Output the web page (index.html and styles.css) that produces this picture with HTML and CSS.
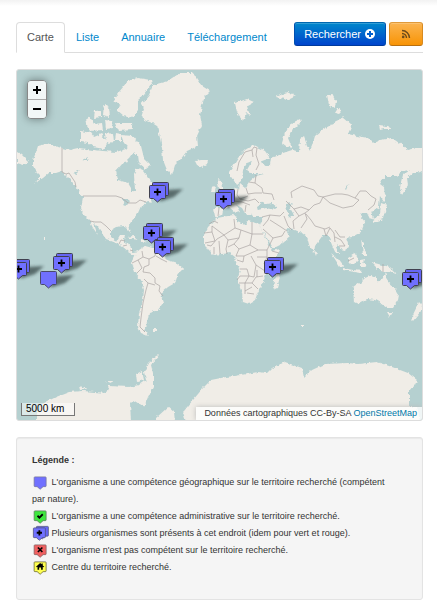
FILE: index.html
```html
<!DOCTYPE html>
<html lang="fr">
<head>
  <meta charset="UTF-8">
  <meta name="viewport" content="width=device-width, initial-scale=1.0">
  <title>Carte des organismes</title>
  <link rel="stylesheet" href="styles.css">
</head>
<body>

  <!-- shared marker shapes -->
  <svg class="sprites" aria-hidden="true">
    <defs>
      <filter id="soft" x="-20%" y="-50%" width="140%" height="200%"><feGaussianBlur stdDeviation="1.5"/></filter>
      <filter id="coast" filterUnits="userSpaceOnUse" x="0" y="60" width="440" height="370">
        <feTurbulence type="fractalNoise" baseFrequency="0.25" numOctaves="2" seed="4"/>
        <feDisplacementMap in="SourceGraphic" scale="4" xChannelSelector="R" yChannelSelector="G"/>
      </filter>
      <path id="bubble" d="M-7.5-6.5h14q1 0 1 1v11q0 1-1 1h-3l-4 3.500-4-3.500h-3q-1 0-1-1v-11q0-1 1-1z"/>
      <g id="plus"><path d="M-4 0h7M-.5-3.5v7" stroke="#000" stroke-width="1.8" fill="none"/></g>
      <g id="shadow"><path d="M0 9L8-2 25-3 16 5 4 9z" fill="#1c2b2b" opacity=".6" filter="url(#soft)"/></g>
      <g id="single"><use href="#shadow"/><use href="#bubble" fill="#7070ff" stroke="#4a4a6a"/></g>
      <g id="multi">
        <use href="#shadow"/>
        <use href="#bubble" x="3" y="-3" fill="#6666f4" stroke="#40404f"/>
        <use href="#bubble" fill="#7070ff" stroke="#40404f"/>
        <use href="#plus"/>
      </g>
    </defs>
  </svg>

  <div class="container">
    <div class="toolbar">
      <nav class="tabs">
        <a class="tab active" href="#carte">Carte</a>
        <a class="tab" href="#liste">Liste</a>
        <a class="tab" href="#annuaire">Annuaire</a>
        <a class="tab" href="#telechargement">Téléchargement</a>
      </nav>
      <div class="actions">
        <button class="btn btn-primary" type="button">Rechercher
          <svg class="btn-icon" viewBox="0 0 10 10" aria-hidden="true"><circle cx="5" cy="5" r="5" fill="#fff"/><path d="M2 5h6M5 2v6" stroke="#0260cc" stroke-width="2"/></svg>
        </button>
        <button class="btn btn-warning" type="button" aria-label="Flux RSS">
          <svg class="btn-icon" viewBox="0 0 10 10" aria-hidden="true"><g fill="none" stroke="#6b4a1b" stroke-width="1.4"><path d="M1 1.5a7.5 7.5 0 0 1 7.5 7.5M1 4.5a4.5 4.5 0 0 1 4.5 4.5"/></g><circle cx="2.2" cy="7.9" r="1.3" fill="#6b4a1b"/></svg>
        </button>
      </div>
    </div>

    <div class="map">
      <svg class="world" viewBox="17 70 405 350" role="img" aria-label="Carte du monde">
        <g class="land" filter="url(#coast)">
          <!-- North America -->
          <path d="M33 160L36 152 38 146 46 144 62 148 70 150 79 148 93 150 103 151 116 152 126 149 131 143 134 151 129 158 123 163 116 171 118 180 128 183 131 188 131 193 135 190 134 175 136 168 143 171 148 178 153 183 160 187 158 194 150 197 152 203 148 202 141 206 138 213 131 222 129 225 131 233 127 229 124 226 116 227 111 230 111 238 116 242 120 235 125 235 123 242 128 243 131 248 133 252 139 251 140 254 134 255 129 252 123 247 116 243 106 239 103 235 98 227 93 222 96 230 98 235 93 228 89 220 84 215 81 208 83 197 78 190 73 183 69 178 66 175 62 171 56 173 49 173 43 178 35 183 41 176 36 171 33 166z"/>
          <path d="M17 152L22 155 29 162 24 165 17 163z"/>
          <!-- Arctic islands -->
          <path d="M128 81L138 78 151 80 152 84 144 95 138 100 138 111 133 118 123 116 116 110 121 105 113 101 119 92z"/>
          <path d="M81 131L91 133 94 137 101 134 108 142 104 149 93 147 88 143 81 142zM121 135L133 136 141 146 144 158 151 165 146 169 139 163 138 155 131 150 124 143zM115 123L132 123 133 130 118 131zM84 121L90 117 94 124 102 123 103 130 90 131zM104 105L109 108 110 117 103 115zM95 111L101 110 101 117 94 118zM105 134L113 133 114 142 107 143zM116 133L121 134 121 142 115 140zM105 120L112 121 113 128 106 129zM117 158L126 156 128 162 121 164z"/>
          <!-- Greenland and Iceland -->
          <path d="M153 85L168 81 180 73 193 73 198 81 202 86 210 91 205 96 202 105 200 115 202 125 197 136 198 146 187 151 180 160 175 165 172 175 167 170 163 160 162 148 160 138 157 126 152 123 141 118 144 108 141 105 149 95z"/>
          <path d="M195 161L201 160 208 160 207 164 202 167 197 165z"/>
          <!-- South America -->
          <path d="M139 250L145 246 157 249 162 255 167 260 177 263 183 268 177 276 175 283 168 287 160 294 163 303 158 310 149 313 147 323 144 330 148 336 141 333 138 327 139 313 143 300 144 290 141 280 134 272 131 263 134 257z"/>
          <!-- Europe and Asia -->
          <path d="M230 171L238 158 245 150 253 145 265 151 270 158 262 161 264 166 270 165 271 158 277 156 283 153 292 150 299 152 300 140 304 137 307 145 310 151 307 158 312 146 315 136 322 130 338 121 342 116 352 125 348 134 357 136 368 138 373 143 380 140 392 138 402 145 408 150 417 148 424 148 424 170 418 173 413 173 407 178 408 185 402 195 400 187 403 175 410 170 402 171 397 176 385 176 380 184 384 187 386 200 384 202 380 196 379 207 371 212 373 218 370 219 367 213 362 213 361 217 365 222 361 232 352 237 346 238 349 247 343 251 338 245 336 247 339 254 336 254 332 245 328 235 323 235 315 246 314 253 310 248 307 237 302 233 295 230 286 229 290 237 283 243 273 248 268 240 262 230 260 225 263 217 253 217 251 212 252 210 250 215 246 215 242 208 235 204 240 212 236 213 229 207 223 210 222 215 215 217 213 208 222 208 221 202 228 198 233 193 235 188 239 189 240 184 245 188 249 182 256 176 264 174 253 174 247 170 252 161 247 163 243 170 242 181 237 185 233 178 230 177z"/>
          <path d="M217 179L221 180 222 188 225 191 217 194 219 188zM212 187L216 186 215 192 211 192zM235 103L247 99 254 102 247 106 250 116 246 113 243 121 237 112zM282 143L285 133 292 123 300 119 301 122 293 130 288 138 292 148 286 146zM327 95L332 94 336 102 334 108 329 105zM338 108L342 111 339 114 335 113zM379 125L387 126 392 129 384 129 380 130zM276 97L283 94 288 92 296 96 288 100z"/>
          <!-- Africa -->
          <path d="M212 223L217 218 233 215 237 217 237 222 245 225 247 221 260 224 262 230 268 243 272 251 280 249 278 255 267 266 266 274 263 283 258 292 255 300 249 304 243 302 242 293 237 280 240 270 236 262 235 257 230 253 222 254 213 255 208 250 204 243 204 235 208 227zM278 272L280 277 277 288 273 290 274 280z"/>
          <!-- Asian islands -->
          <path d="M381 203L387 205 384 214 383 219 375 222 372 224 372 220 380 215zM331 253L338 259 344 267 340 267zM343 268L353 270 362 271 361 273 343 270zM348 258L356 253 358 260 353 265 348 262zM360 260L366 259 363 262 366 267 360 267zM361 240L364 243 364 249 368 255 363 255zM371 262L382 265 390 267 397 274 390 272 383 272 378 269zM314 251L317 252 316 256zM126 237L133 236 139 240 132 239zM141 239L147 241 141 242z"/>
          <!-- Oceania -->
          <path d="M353 288L360 283 365 278 372 275 377 277 377 281 381 282 385 273 388 282 395 288 399 295 398 300 393 308 387 308 380 303 375 300 367 299 358 304 354 302zM387 312L393 312 390 317zM419 302L422 305 421 311 413 321 411 319z"/>
          <!-- Antarctica -->
          <path d="M36 422L36 415 44 403 56 397 69 392 83 391 106 393 109 386 129 387 139 385 146 380 144 372 148 363 156 356 159 355 151 365 153 373 153 387 148 397 144 407 133 400 130 403 131 422zM156 422L156 418 168 407 174 412 175 422zM186 422L183 412 193 400 203 388 211 380 226 377 235 376 258 372 267 373 272 368 285 362 302 368 304 378 312 370 325 364 348 363 358 364 377 362 392 367 408 373 417 380 415 385 409 392 409 407 417 407 420 422zM79 386L87 389 80 390zM105 381L114 381 110 383z"/>
          <path d="M153 329h4v2h-4zM136 374L142 371 144 380 137 382zM270 276h1v1zM44 237h1v2h-1zM301 325h3v1h-3z"/>
        </g>
        <!-- inland seas -->
        <g class="water" filter="url(#coast)">
          <path d="M257 206L263 202 266 204 272 203 278 208 275 210 266 208 258 210zM286 204L292 203 290 208 294 215 290 218 287 211zM122 199L129 199 130 203 125 206zM82 160L88 157 87 161zM73 173L80 170 76 174zM345 189L349 183 346 190z"/>
        </g>
        <g class="borders">
          <path d="M62 148V172L66 174 69 173 75 182 76 187M83 196H116L122 198 128 203 136 203 140 200 146 202M90 221L95 222 101 222 106 226 111 231M119 244L121 240 125 241M123 246L127 245M130 250L133 251"/>
          <path d="M142 251L143 257 149 259 149 265 144 267 143 272M149 259L155 256 156 250M156 256L161 259 167 262M143 257L138 260 132 263M138 260L142 268 137 273M143 272L150 273 155 278 155 283 160 286 159 291 163 296M144 279L148 283 146 290 143 303 141 318 140 327 145 332M148 283L155 285"/>
          <path d="M237 171L239 162 245 152 252 150 254 147 257 148M252 150L253 157M257 148L256 155 259 164 256 170M256 175L255 183 262 188 263 193 272 194 274 200M249 182L255 183M246 188L248 194 255 193 262 193M238 189L237 195 240 199 248 196M222 205L229 207M233 194L229 199 232 205M240 199L248 201 255 199 259 203M233 201L242 202 250 205M246 205L245 212M219 208L218 216"/>
          <path d="M262 217L270 215 280 216 284 212M270 215L268 220 263 226M270 220L281 227 287 231M263 229L273 238 270 244M273 238L282 236 285 231M284 216L288 226 292 230M292 198L291 192 302 186 314 190 318 196 323 197 320 203 314 205 309 210 301 207 294 209 286 201M294 209L299 216 305 213 309 210M299 216L293 221 294 229M305 213L307 219 301 228M306 214L311 220 315 226 325 229 330 227M323 197L330 203 343 208 353 206 359 200 355 198 348 195 342 194 335 194 323 197M355 198L360 191 366 191 371 196 376 199 374 205 368 210M324 229L326 236 330 228 334 233 335 242M335 230L340 237 345 237M335 237L341 240 345 246 339 246M348 261L354 258M383 264V272"/>
          <path d="M209 224L214 221 218 223M204 233L212 232 212 226 224 235 235 228 234 219M212 232L215 241 205 243M224 235L217 239 211 246 207 245M235 228L241 230 239 238 228 240 224 235M241 230L252 234 252 222M252 234H263M252 234L250 245 258 250 267 250 270 244M239 238L234 244 239 249 250 245M228 240L226 249 227 254M219 241L220 254M214 247L214 254M234 244L228 247M239 249L236 256 244 256 251 253 258 250M237 260L243 262 244 256M240 269L247 269 249 276 254 277 256 265 251 256M249 276H240L237 280M256 265L265 271M257 257L267 257V250M267 257L264 264M249 276L245 283V294M239 283L252 283 256 277 263 276M252 283L258 289M245 291L252 287M257 270L257 277M272 251L279 253M247 293L254 294"/>
        </g>
        <g class="markers">
          <use href="#multi" x="158" y="192"/>
          <use href="#multi" x="224" y="199"/>
          <use href="#multi" x="152" y="233"/>
          <use href="#multi" x="163" y="247"/>
          <use href="#multi" x="62" y="263"/>
          <use href="#multi" x="273" y="267"/>
          <use href="#multi" x="19" y="269"/>
          <use href="#multi" x="411" y="279"/>
          <use href="#single" x="49" y="278"/>
        </g>
      </svg>
      <div class="zoom">
        <button type="button" aria-label="Zoom avant">
          <svg viewBox="0 0 8 8" aria-hidden="true"><path d="M0 4h8M4 0v8" stroke="#000" stroke-width="2"/></svg>
        </button>
        <button type="button" aria-label="Zoom arrière">
          <svg viewBox="0 0 8 8" aria-hidden="true"><path d="M0 4h8" stroke="#000" stroke-width="2"/></svg>
        </button>
      </div>
      <div class="scale">5000 km</div>
      <div class="attribution">Données cartographiques CC-By-SA <a href="#osm">OpenStreetMap</a></div>
    </div>

    <div class="well">
      <h2>Légende :</h2>
      <ul class="legend">
        <li><svg class="pin" viewBox="-9 -9 18 20" aria-hidden="true"><use href="#bubble" fill="#7070ff" stroke="#77779a"/></svg> L'organisme a une compétence géographique sur le territoire recherché (compétent par nature).</li>
        <li><svg class="pin" viewBox="-9 -9 18 20" aria-hidden="true"><use href="#bubble" fill="#3fe63f" stroke="#5c7a5c"/><path d="M-4 0l2.5 2.5L3-2" stroke="#000" stroke-width="2.4" fill="none"/></svg> L'organisme a une compétence administrative sur le territoire recherché.</li>
        <li><svg class="pin" viewBox="-9 -9 18 20" aria-hidden="true"><use href="#bubble" x="3" y="-2" fill="#6666f4" stroke="#50507a"/><use href="#bubble" x="-1" fill="#7070ff" stroke="#50507a"/><path d="M-5 0h7M-1.500-3.500v7" stroke="#000" stroke-width="2.400"/></svg> Plusieurs organismes sont présents à cet endroit (idem pour vert et rouge).</li>
        <li><svg class="pin" viewBox="-9 -9 18 20" aria-hidden="true"><use href="#bubble" fill="#f06060" stroke="#806060"/><path d="M-3.500-3l6 6M2.500-3l-6 6" stroke="#000" stroke-width="2.200"/></svg> L'organisme n'est pas compétent sur le territoire recherché.</li>
        <li><svg class="pin" viewBox="-9 -9 18 20" aria-hidden="true"><use href="#bubble" fill="#ffff50" stroke="#606030"/><path d="M-6 0L-.5-5 1.500-3.200V-4.500H3V-1.800L5 0 4 .8 3 0V4H.8V1H-1.800V4H-4V0L-5 .8z" fill="#000"/></svg> Centre du territoire recherché.</li>
      </ul>
    </div>
  </div>

</body>
</html>
```
FILE: styles.css
```css
* {
  margin: 0;
  padding: 0;
  box-sizing: border-box;
}

body {
  font-family: "Liberation Sans", Arial, sans-serif;
  font-size: 11px;
  line-height: 17px;
  color: #333;
  background: #fff linear-gradient(#f2f2f2, #fff) top / 100% 6px no-repeat;
}

a {
  color: #08c;
  text-decoration: none;
}

.sprites {
  position: absolute;
  width: 0;
  height: 0;
}

.container {
  padding: 22px 14px 6px 16px;
}

.toolbar {
  display: flex;
  justify-content: space-between;
  height: 31px;
  border-bottom: 1px solid #ddd;
}

.tabs {
  display: flex;
}

.tab {
  height: 31px;
  padding: 6px 10px;
  border: 1px solid transparent;
  border-radius: 4px 4px 0 0;
}

.tab.active {
  color: #555;
  background: #fff;
  border-color: #ddd;
  border-bottom-color: #fff;
}

.actions {
  display: flex;
  align-items: flex-start;
  gap: 3px;
}

.btn {
  display: flex;
  align-items: center;
  gap: 4px;
  height: 24px;
  padding: 0 10px;
  font: 11px "Liberation Sans", Arial, sans-serif;
  border: 1px solid;
  border-radius: 3px;
  box-shadow: inset 0 1px 0 rgba(255, 255, 255, 0.2);
  cursor: pointer;
}

.btn-primary {
  padding: 0 10px 0 9px;
  color: #fff;
  background: linear-gradient(#08c, #04c);
  border-color: #0067b0 #0050b0 #003a9c;
}

.btn-warning {
  padding: 0 11px;
  background: linear-gradient(#fbb450, #f89406);
  border-color: #e09a3a #d88a20 #b97010;
}

.btn-icon {
  width: 10px;
  height: 10px;
}

.map {
  position: relative;
  margin: 16px 0;
  border: 1px solid #ddd;
  border-radius: 3px;
  overflow: hidden;
  background: #b5d0d0;
}

.world {
  display: block;
  width: 100%;
}

.land {
  fill: #f0ede7;
}

.water {
  fill: #b5d0d0;
}

.borders {
  fill: none;
  stroke: #aaa5a3;
  stroke-width: 0.7;
  stroke-linejoin: round;
}

.zoom {
  position: absolute;
  top: 10px;
  left: 10px;
  border: 1px solid #888;
  border-radius: 4px;
  overflow: hidden;
  box-shadow: 0 0 8px rgba(0, 0, 0, 0.4);
}

.zoom button {
  display: flex;
  align-items: center;
  justify-content: center;
  width: 18px;
  height: 18px;
  background: #f2f7f7;
  border: 0;
  cursor: pointer;
}

.zoom button + button {
  height: 19px;
  border-top: 1px solid #aaa;
}

.zoom svg {
  width: 8px;
  height: 8px;
}

.scale {
  position: absolute;
  left: 4px;
  bottom: 4px;
  width: 54px;
  padding: 0 4px;
  font-size: 10px;
  line-height: 12px;
  color: #000;
  white-space: nowrap;
  background: rgba(255, 255, 255, 0.5);
  border: 1px solid #777;
  border-top: 0;
}

.attribution {
  position: absolute;
  right: 0;
  bottom: 0;
  padding: 0 5px 0 8px;
  font-size: 9px;
  line-height: 13px;
  white-space: nowrap;
  background: rgba(255, 255, 255, 0.8);
  box-shadow: 0 0 5px #bbb;
}

.attribution a {
  color: #0078a8;
}

.well {
  padding: 14px 15px 23px;
  background: #f5f5f5;
  border: 1px solid #e3e3e3;
  border-radius: 3px;
  box-shadow: inset 0 1px 1px rgba(0, 0, 0, 0.05);
}

.well h2 {
  margin-bottom: 5px;
  font-size: 9px;
  line-height: 17px;
}

.legend {
  padding-right: 16px;
  list-style: none;
  font-size: 9px;
}

.pin {
  width: 17px;
  height: 15px;
  vertical-align: middle;
  overflow: visible;
}
```
